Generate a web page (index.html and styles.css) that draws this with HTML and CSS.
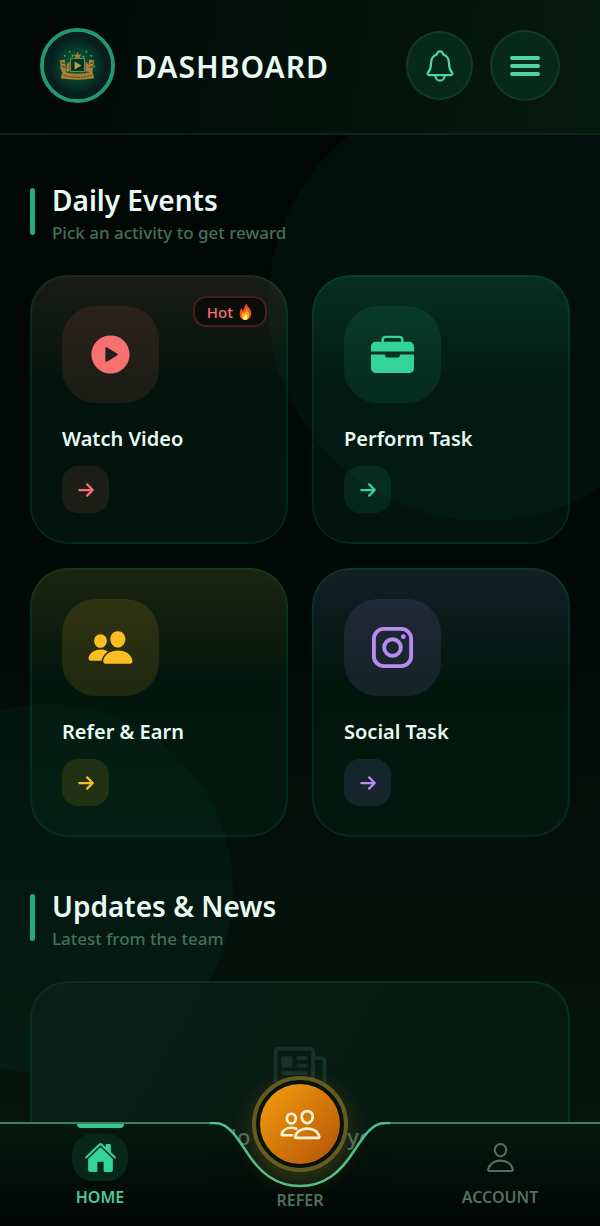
FILE: index.html
```
<!DOCTYPE html>
<html lang="en">
<head>
  <meta charset="utf-8">
  <meta name="viewport" content="width=device-width, initial-scale=1">
  <title>Dashboard</title>
  <link rel="stylesheet" href="styles.css">
</head>
<body>
  <div class="app">
    <div class="glow glow-top"></div>
    <div class="glow glow-bottom"></div>

    <header class="header">
      <svg class="avatar" viewBox="0 0 68 68" aria-hidden="true">
        <defs>
          <radialGradient id="halo">
            <stop offset="0" stop-color="#0a7d42"/>
            <stop offset="0.5" stop-color="#06452d"/>
            <stop offset="1" stop-color="#07201f"/>
          </radialGradient>
        </defs>
        <rect width="68" height="68" fill="#07201f"/>
        <circle cx="34" cy="34" r="28" fill="url(#halo)"/>
        <g transform="translate(0 2)">
          <g fill="#a8803a">
            <path d="M34 18l1 3 3 0-2 2 1 3-3-2-3 2 1-3-2-2 3 0z"/>
            <path d="M19 38q15 5 30 0l2 7q-17 3-34 0z"/>
            <path d="M16 27l5-1 2 12-5 1zM46 26l5 1-2 12-5-1z"/>
            <path d="M23 31l3-3v10h-3zM42 28l3 3v7h-3z"/>
          </g>
          <path d="M18 29l3 1M18 33l4 1M47 30l3-1M46 34l4-1" stroke="#4a3414"/>
          <rect x="27" y="25" width="14" height="13" fill="#06331f" stroke="#7d8a3d"/>
          <path d="M31 28l7 4-7 4z" fill="#a9a24e"/>
          <path d="M20 42q14 4 28 0" fill="none" stroke="#4a2d12" stroke-dasharray="2 1"/>
          <g fill="#2fae5c">
            <circle cx="21" cy="22" r="1"/><circle cx="26" cy="18" r="1"/><circle cx="43" cy="18" r="1"/>
            <circle cx="48" cy="22" r="1"/><circle cx="17" cy="34" r="1"/><circle cx="51" cy="33" r="1"/>
            <circle cx="29" cy="22" r="1"/><circle cx="40" cy="23" r="1"/>
          </g>
        </g>
      </svg>
      <h1>DASHBOARD</h1>
      <button class="round-btn bell" aria-label="Notifications">
        <svg viewBox="0 0 512 512" class="line">
          <path d="M427.68 351.43C402 320 383.87 304 383.87 217.35 383.87 138 343.35 109.73 310 96c-4.43-1.82-8.6-6-9.95-10.55C294.2 65.54 277.8 48 256 48s-38.21 17.55-44 37.47c-1.35 4.6-5.52 8.71-9.95 10.53-33.39 13.75-73.87 41.92-73.87 121.35C128.13 304 110 320 84.32 351.43 73.68 364.45 83 384 101.61 384h308.88c18.51 0 27.77-19.61 17.19-32.57zM320 384v16a64 64 0 01-128 0v-16"/>
        </svg>
      </button>
      <button class="round-btn menu" aria-label="Menu">
        <span></span><span></span><span></span>
      </button>
    </header>

    <main class="content">
      <div class="section-head">
        <h2>Daily Events</h2>
        <p>Pick an activity to get reward</p>
      </div>

      <div class="cards">
        <a href="#" class="card red">
          <span class="badge">Hot
            <svg viewBox="0 0 16 18" aria-hidden="true">
              <path d="M8 0c1 3 5 5 6 9 1 5-2 9-6 9s-7-3-6-8c0-2 1-4 2-5 0 2 0 3 1 3 2-2 3-5 3-8z" fill="#f4511e"/>
              <path d="M9 5c0 3 3 4 3 7 0 4-2 6-4 6s-5-2-4-5c0-2 1-3 2-4 0 1 0 2 1 2 1-1 2-3 2-6z" fill="#ffa726"/>
              <path d="M8 11c2 2 2 3 2 4 0 2-1 3-2 3s-3-1-2-3c0-1 2-2 2-4z" fill="#fff176"/>
            </svg>
          </span>
          <span class="tile">
            <svg viewBox="0 0 512 512">
              <path fill-rule="evenodd" d="M256 48a208 208 0 100 416 208 208 0 000-416zM216.32 334.44l114.45-69.14a10.89 10.89 0 000-18.6l-114.45-69.14a10.78 10.78 0 00-16.32 9.31v138.26a10.78 10.78 0 0016.32 9.31z"/>
            </svg>
          </span>
          <span class="card-title">Watch Video</span>
          <span class="go"><svg viewBox="0 0 16 16"><path d="M2 8h12M9 3l5 5-5 5"/></svg></span>
        </a>

        <a href="#" class="card green">
          <span class="tile">
            <svg viewBox="0 0 48 48">
              <path d="M7 11h34a5 5 0 015 5v5H2v-5a5 5 0 015-5zM2 24h14.500v1a2 2 0 002 2h11a2 2 0 002-2v-1H46v14a5 5 0 01-5 5H7a5 5 0 01-5-5z"/>
              <path d="M14 12V9a3 3 0 013-3h14a3 3 0 013 3v3" fill="none" stroke="currentColor" stroke-width="2.500"/>
            </svg>
          </span>
          <span class="card-title">Perform Task</span>
          <span class="go"><svg viewBox="0 0 16 16"><path d="M2 8h12M9 3l5 5-5 5"/></svg></span>
        </a>

        <a href="#" class="card yellow">
          <span class="tile">
            <svg viewBox="0 0 512 512">
              <path d="M336 256c-20.56 0-40.44-9.18-56-25.84-15.13-16.25-24.37-37.92-26-61-1.740-24.620 5.770-47.260 21.140-63.760S312 80 336 80c23.830 0 45.380 9.060 60.700 25.520 15.470 16.620 23 39.220 21.260 63.630-1.670 23.110-10.900 44.770-26 61C376.440 246.820 356.570 256 336 256zM467.830 432H204.180a27.710 27.710 0 01-22-10.670 30.220 30.220 0 01-5.260-25.790c8.420-33.810 29.280-61.850 60.320-81.080C264.790 297.400 299.860 288 336 288c36.850 0 71 9 98.710 26.050 31.110 19.130 52 47.330 60.380 81.550a30.270 30.270 0 01-5.320 25.780A27.680 27.680 0 01467.830 432zM147 260c-35.190 0-66.130-32.720-69-72.930-1.420-20.600 5-39.650 18-53.620 12.860-13.830 31-21.450 51-21.450s38 7.660 50.930 21.570c13.100 14.080 19.500 33.090 18 53.520-2.870 40.200-33.800 72.910-68.930 72.910zM212.660 291.450c-17.590-8.600-40.420-12.900-65.650-12.900-29.460 0-58.070 7.680-80.570 21.620-25.510 15.830-42.670 38.880-49.600 66.710a27.390 27.390 0 004.790 23.360A25.320 25.320 0 0041.720 400h111a8 8 0 007.870-6.570c.11-.63.25-1.260.41-1.880 8.480-34.060 28.350-62.840 57.710-83.820a8 8 0 00-.63-13.390c-1.570-.92-3.370-1.890-5.420-2.890z"/>
            </svg>
          </span>
          <span class="card-title">Refer &amp; Earn</span>
          <span class="go"><svg viewBox="0 0 16 16"><path d="M2 8h12M9 3l5 5-5 5"/></svg></span>
        </a>

        <a href="#" class="card purple">
          <span class="tile">
            <svg viewBox="0 0 48 48">
              <rect x="5" y="5" width="38" height="38" rx="10" fill="none" stroke="currentColor" stroke-width="4"/>
              <circle cx="24" cy="24" r="8.500" fill="none" stroke="currentColor" stroke-width="4"/>
              <circle cx="35" cy="13" r="2.500"/>
            </svg>
          </span>
          <span class="card-title">Social Task</span>
          <span class="go"><svg viewBox="0 0 16 16"><path d="M2 8h12M9 3l5 5-5 5"/></svg></span>
        </a>
      </div>

      <div class="section-head">
        <h2>Updates &amp; News</h2>
        <p>Latest from the team</p>
      </div>

      <div class="news">
        <svg viewBox="0 0 512 512" class="line">
          <path d="M368 415.860V72a24.070 24.070 0 00-24-24H72a24.070 24.070 0 00-24 24v352a40.120 40.120 0 0040 40h328"/>
          <path d="M416 464a48 48 0 01-48-48V128h72a24 24 0 0124 24v264a48 48 0 01-48 48zM240 128h64M240 192h64M112 256h192M112 320h192M112 384h192"/>
          <rect x="96" y="112" width="96" height="96" rx="16" fill="currentColor" stroke="none"/>
        </svg>
        <p>No updates yet</p>
      </div>
    </main>

    <nav class="nav">
      <div class="nav-bg">
        <div class="nav-side"></div>
        <svg class="nav-notch" viewBox="0 0 180 104" aria-hidden="true">
          <defs>
            <linearGradient id="bar" x2="0" y2="104" gradientUnits="userSpaceOnUse">
              <stop offset="0" stop-color="#051910"/>
              <stop offset="1" stop-color="#010504"/>
            </linearGradient>
          </defs>
          <path d="M0 1H5C18 1 26 14 36 29C50 51 66 64 90 64S130 51 144 29C154 14 162 1 175 1H180V104H0z" fill="url(#bar)"/>
          <path d="M0 1H5C18 1 26 14 36 29C50 51 66 64 90 64S130 51 144 29C154 14 162 1 175 1H180" fill="none" stroke="#4fc08d" stroke-width="2.500"/>
        </svg>
        <div class="nav-side"></div>
      </div>
      <a href="#" class="nav-item active">
        <span class="nav-icon">
          <svg viewBox="0 0 512 512">
            <path d="M261.560 101.280a8 8 0 00-11.060 0L66.400 277.150a8 8 0 00-2.470 5.790L63.900 448a32 32 0 0032 32H192a16 16 0 0016-16V328a8 8 0 018-8h80a8 8 0 018 8v136a16 16 0 0016 16h96.060a32 32 0 0032-32V282.940a8 8 0 00-2.470-5.790z"/>
            <path d="M490.910 244.150l-74.800-71.560V64a16 16 0 00-16-16h-48a16 16 0 00-16 16v32l-57.920-55.380C272.770 35.140 264.710 32 256 32c-8.680 0-16.720 3.140-22.140 8.630l-212.700 203.500c-6.220 6-7 15.870-1.340 22.370A16 16 0 0043 267.560L250.500 69.280a8 8 0 0111.060 0l207.520 198.280a16 16 0 0022.590-.44c6.140-6.360 5.630-16.860-.76-22.970z"/>
          </svg>
        </span>
        HOME
      </a>
      <a href="#" class="nav-item refer">
        <span class="fab">
          <svg viewBox="0 0 512 512" class="line">
            <path d="M402 168c-2.930 40.670-33.100 72-66 72s-63.120-31.320-66-72c-3-42.310 26.370-72 66-72s69 30.460 66 72z"/>
            <path d="M336 304c-65.170 0-127.840 32.370-143.540 95.410-2.080 8.340 3.150 16.590 11.720 16.590h263.650c8.570 0 13.770-8.250 11.720-16.590C463.850 335.360 401.180 304 336 304z"/>
            <path d="M200 185.940c-2.340 32.480-26.720 58.060-53 58.060s-50.700-25.570-53-58.060C91.610 152.150 115.340 128 147 128s55.390 24.770 53 57.940z"/>
            <path d="M206 306c-18.050-8.270-37.930-11.450-59-11.450-52 0-102.100 25.850-114.650 76.200-1.650 6.660 2.530 13.250 9.370 13.250H154"/>
          </svg>
        </span>
        REFER
      </a>
      <a href="#" class="nav-item">
        <span class="nav-icon">
          <svg viewBox="0 0 512 512" class="line">
            <path d="M344 144c-3.920 52.870-44 96-88 96s-84.150-43.120-88-96c-4-55 35-96 88-96s92 42 88 96z"/>
            <path d="M256 304c-87 0-175.300 48-191.640 138.600C62.390 453.520 68.570 464 80 464h352c11.440 0 17.620-10.480 15.650-21.400C431.300 352 343 304 256 304z"/>
          </svg>
        </span>
        ACCOUNT
      </a>
    </nav>
  </div>
</body>
</html>
```

FILE: styles.css
```
* {
  box-sizing: border-box;
}

body {
  margin: 0;
  background: #010605;
  color: #e8faf2;
  font-family: "Noto Sans", sans-serif;
}

a {
  color: inherit;
  text-decoration: none;
}

svg {
  display: block;
  fill: currentColor;
}

.line {
  fill: none;
  stroke: currentColor;
  stroke-width: 32;
  stroke-linecap: round;
  stroke-linejoin: round;
}

.app {
  position: relative;
  display: flex;
  flex-direction: column;
  height: 100vh;
  overflow: hidden;
  background: linear-gradient(#010605, #020a07 50%, #06180f);
}

/* background circles */
.glow {
  position: absolute;
  border-radius: 50%;
  background: rgba(16, 185, 129, 0.05);
}

.glow-top {
  top: 87px;
  right: -102px;
  width: 434px;
  height: 434px;
}

.glow-bottom {
  bottom: 152px;
  left: -137px;
  width: 370px;
  height: 370px;
}

.header {
  position: relative;
  display: flex;
  align-items: center;
  height: 135px;
  padding: 0 40px 2px;
  background: linear-gradient(100deg, #010705, #03110b 50%, #06190f);
  border-bottom: 2px solid #0b241b;
}

.avatar {
  width: 75px;
  height: 75px;
  border: 4px solid #21986f;
  border-radius: 50%;
}

h1 {
  flex: 1;
  margin: 2px 0 0 20px;
  font-size: 30px;
  font-weight: 600;
  letter-spacing: 1px;
}

.round-btn {
  display: flex;
  flex-direction: column;
  align-items: center;
  justify-content: center;
  padding: 0;
  color: #4fd3a0;
  background: #06291c;
  border: 2px solid #113a2b;
  border-radius: 50%;
}

.bell {
  width: 67px;
  height: 69px;
  margin-right: 17px;
}

.bell svg {
  width: 36px;
  height: 36px;
}

.menu {
  gap: 4px;
  width: 70px;
  height: 71px;
}

.menu span {
  width: 30px;
  height: 4px;
  background: #4fd3a0;
  border-radius: 2px;
}

.content {
  position: relative;
  flex: 1;
  min-height: 0;
  padding: 46px 30px 0;
  overflow: hidden;
}

.section-head {
  position: relative;
  padding-left: 22px;
}

.section-head::before {
  content: "";
  position: absolute;
  top: 7px;
  left: 0;
  width: 5px;
  height: 47px;
  background: #24ac7d;
  border-radius: 3px;
}

h2 {
  margin: 0;
  font-size: 28px;
  font-weight: 600;
  line-height: 38px;
}

.section-head p {
  margin: 0;
  color: #447057;
  font-size: 17px;
  font-weight: 500;
  line-height: 28px;
}

.cards {
  display: grid;
  grid-template-columns: 1fr 1fr;
  gap: 24px;
  margin: 28px 0 50px;
}

.card {
  position: relative;
  display: flex;
  flex-direction: column;
  align-items: flex-start;
  padding: 29px 30px;
  border: 2px solid rgba(16, 185, 129, 0.12);
  border-radius: 38px;
  background: linear-gradient(var(--top), transparent 42%) border-box, rgba(6, 60, 38, 0.22);
}

.red {
  --main: #f87171;
  --top: rgba(248, 113, 113, 0.1);
  --soft: rgba(248, 113, 113, 0.11);
}

.green {
  --main: #34d399;
  --top: rgba(52, 211, 153, 0.12);
  --soft: rgba(52, 211, 153, 0.1);
}

.yellow {
  --main: #fbbf24;
  --top: rgba(251, 191, 36, 0.1);
  --soft: rgba(251, 191, 36, 0.12);
}

.purple {
  --main: #b98af0;
  --top: rgba(167, 139, 250, 0.1);
  --soft: rgba(167, 139, 250, 0.12);
}

.tile {
  display: grid;
  place-items: center;
  width: 97px;
  height: 97px;
  color: var(--main);
  background: var(--soft);
  border-radius: 34px;
}

.tile svg {
  width: 47px;
  height: 47px;
}

.card-title {
  margin: 20px 0 12px;
  font-size: 20px;
  font-weight: 600;
  line-height: 31px;
}

.go {
  display: grid;
  place-items: center;
  width: 47px;
  height: 47px;
  background: var(--soft);
  border-radius: 16px;
}

.go svg {
  width: 18px;
  height: 18px;
  fill: none;
  stroke: var(--main);
  stroke-width: 2;
  stroke-linecap: round;
  stroke-linejoin: round;
}

.badge {
  position: absolute;
  top: 19px;
  right: 19px;
  display: flex;
  align-items: center;
  gap: 5px;
  height: 31px;
  padding: 0 12px;
  color: #f87171;
  font-size: 15px;
  font-weight: 500;
  background: #0b0d0b;
  border: 2px solid #46211f;
  border-radius: 13px;
}

.badge svg {
  width: 15px;
  height: 17px;
}

.news {
  display: flex;
  flex-direction: column;
  align-items: center;
  gap: 18px;
  height: 300px;
  margin-top: 28px;
  padding-top: 60px;
  color: #4d6b5d;
  background: linear-gradient(120deg, #0a1f18, #06180f);
  border: 2px solid #0c2e20;
  border-radius: 38px;
}

.news svg {
  width: 60px;
  height: 60px;
  color: #16322a;
}

.news p {
  margin: 0;
  font-size: 22px;
  font-weight: 500;
  line-height: 30px;
}

.nav {
  position: absolute;
  right: 0;
  bottom: 0;
  left: 0;
  display: grid;
  grid-template-columns: 1fr 1fr 1fr;
  height: 104px;
}

.nav-bg {
  position: absolute;
  inset: 0;
  display: flex;
}

.nav-side {
  flex: 1;
  border-top: 2px solid #38825f;
  background: linear-gradient(#051910, #010504);
}

.nav-notch {
  width: 180px;
  height: 104px;
}

.nav-item {
  position: relative;
  display: flex;
  flex-direction: column;
  align-items: center;
  gap: 5px;
  padding-top: 12px;
  color: #52705f;
  font-size: 16px;
  font-weight: 600;
  line-height: 22px;
}

.nav-icon {
  display: grid;
  place-items: center;
  width: 56px;
  height: 47px;
  border-radius: 20px;
}

.nav-icon svg {
  width: 33px;
  height: 33px;
}

.active {
  color: #4fc996;
}

.active .nav-icon {
  color: #34d399;
  background: #08271b;
}

.active::before {
  content: "";
  position: absolute;
  top: 2px;
  width: 47px;
  height: 4px;
  background: #34c892;
  border-radius: 0 0 4px 4px;
}

.refer {
  justify-content: flex-end;
  padding-bottom: 15px;
}

/* raised button sitting in the notch */
.fab {
  position: absolute;
  top: -46px;
  display: grid;
  place-items: center;
  width: 96px;
  height: 96px;
  color: #fff3d6;
  background: #04130c;
  border: 4px solid #655a20;
  border-radius: 50%;
  box-shadow: 0 8px 24px rgba(245, 158, 11, 0.2);
}

.fab::before {
  content: "";
  position: absolute;
  inset: 4px;
  background: linear-gradient(135deg, #f59e0b, #b45309);
  border-radius: 50%;
}

.fab svg {
  position: relative;
  width: 43px;
  height: 43px;
}
```
